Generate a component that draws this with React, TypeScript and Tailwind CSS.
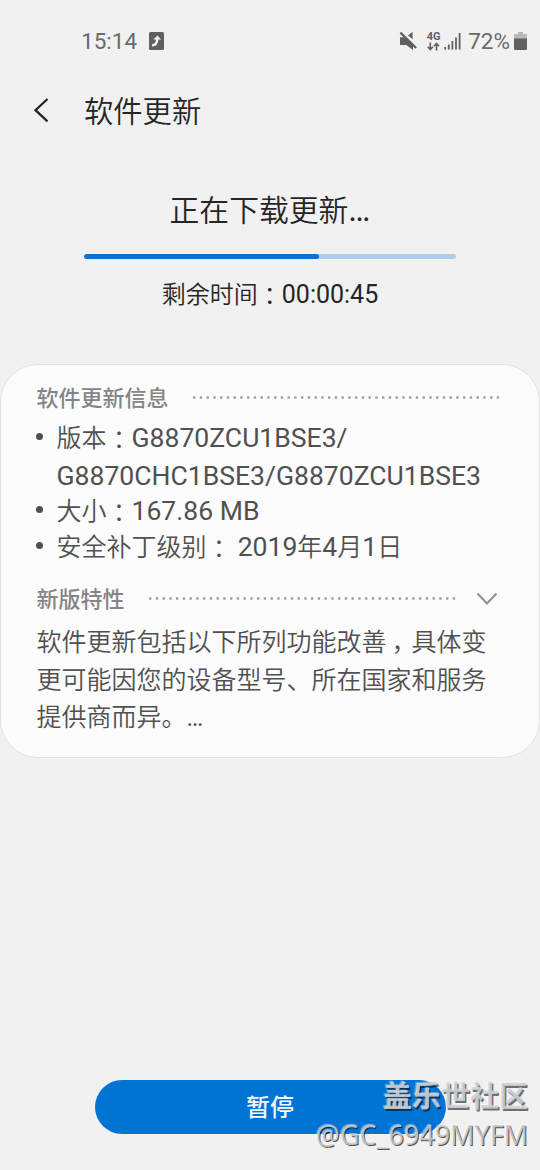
import type { ReactNode } from "react";

function Colon() {
  return <span className="relative top-[1.5px] font-['Noto_Sans_CJK_JP',sans-serif]">：</span>;
}

function Latin({ children }: { children: ReactNode }) {
  return <span className="text-[26.55px] font-normal">{children}</span>;
}

function StatusBar() {
  return (
    <header className="flex h-[82px] items-center pl-[81px] pr-[13px] text-[22.5px] font-normal text-[#6a6a6a]">
      <span className="w-[56px] leading-none">15:14</span>
      <svg className="ml-3 h-[18px] w-[15px]" viewBox="0 0 15 18">
        <rect width="15" height="18" rx="1.5" fill="#606060" />
        <path d="M3 13.4 C6.5 13.4 8.2 11.5 8.2 6.5" fill="none" stroke="#f1f1f1" strokeWidth="2.4" />
        <path d="M4.4 7.4 8.3 3.4 12.2 7.4Z" fill="#f1f1f1" />
      </svg>
      <div className="ml-auto flex items-center">
        <svg className="h-[20px] w-[18px]" viewBox="0 0 18 20">
          <path d="M1 6.3H6L14 14V19L7.3 14H1Z M9 4.6 13.6 0.8V8.3Z" fill="#606060" />
          <path d="M1.4 1.6 17.2 17" stroke="#606060" strokeWidth="2.2" />
        </svg>
        <div className="ml-[9px] flex w-[15px] flex-col items-center">
          <span className="text-[11px] font-bold leading-[10px] text-[#606060]">4G</span>
          <svg className="h-[9px] w-[13px]" viewBox="0 0 13 9">
            <path d="M3.3 0.5V7.5 M0.7 4.8 3.3 7.6 5.9 4.8 M9.5 8.5V1.5 M6.9 4.2 9.5 1.4 12.1 4.2" fill="none" stroke="#606060" strokeWidth="1.6" />
          </svg>
        </div>
        <svg className="ml-[3px] h-[18px] w-[17px]" viewBox="0 0 17 18">
          <path d="M1.2 15V17.5 M4.8 12.5V17.5 M8.4 9V17.5 M12 5.5V17.5 M15.6 1V17.5" stroke="#606060" strokeWidth="1.8" />
        </svg>
        <span className="ml-[7px] leading-none">72%</span>
        <svg className="ml-[4px] h-[18px] w-[13px]" viewBox="0 0 13 18">
          <path d="M4 0H9V2H13V7H0V2H4Z" fill="#b9b9b9" />
          <path d="M0 6.5H13V17Q13 18 12 18H1Q0 18 0 17Z" fill="#606060" />
        </svg>
      </div>
    </header>
  );
}

function InfoRow({ children, className }: { children: ReactNode; className: string }) {
  return (
    <li className={`flex ${className}`}>
      <span className="-ml-px mr-[14px] mt-[15px] size-[7px] shrink-0 rounded-full bg-[#505050]" />
      <span className="whitespace-nowrap">{children}</span>
    </li>
  );
}

function Dots() {
  return (
    <svg className="mb-px h-[3px] min-w-0 flex-1" aria-hidden="true">
      <line x1="0" y1="1.5" x2="100%" y2="1.5" stroke="#a0a0a0" strokeWidth="2.4" strokeDasharray="2.4 4.35" />
    </svg>
  );
}

export default function App() {
  return (
    <div className="relative flex h-[1170px] w-[540px] flex-col overflow-hidden bg-[#f1f1f1] font-['Roboto','Noto_Sans_CJK_SC',sans-serif] font-[350] text-[#252525]">
      <StatusBar />

      <nav className="flex h-[56px] items-center pl-[33px]">
        <svg className="h-[26px] w-[16px]" viewBox="0 0 16 26">
          <path d="M14.5 2 2.5 13.2 14.5 24.4" fill="none" stroke="#252525" strokeWidth="2.3" />
        </svg>
        <h1 className="ml-[35px] pt-[5px] text-[29.3px] leading-[51px]">软件更新</h1>
      </nav>

      <section className="mt-[52px] flex flex-col items-center">
        <h2 className="h-[64px] text-[29.8px] leading-[40px]">
          正在下载更新<span className="text-[33px] font-normal">…</span>
        </h2>
        <div className="h-[5px] w-[372px] overflow-hidden rounded-full bg-[#adcde8]">
          <div className="h-full w-[235px] rounded-full bg-[#0c72cb]" />
        </div>
        <p className="mt-[14px] text-[24px] leading-[40px]">
          剩余时间<Colon /><span className="text-[25px] font-normal">00:00:45</span>
        </p>
      </section>

      <section className="mt-[49px] h-[394px] rounded-[38px] border border-[#e2e2e2] bg-[#fcfcfc] pl-[35.5px] pr-[37.5px] pt-[15px] text-[25px] text-[#505050]">
        <div className="flex h-[36px] items-center text-[#858585]">
          <h3 className="mr-[24px] text-[22px] font-medium">软件更新信息</h3>
          <Dots />
        </div>
        <ul className="mt-[2px] leading-[37px]">
          <InfoRow className="h-[73px]">
            版本<Colon /><Latin>G8870ZCU1BSE3/</Latin>
            <br />
            <Latin>G8870CHC1BSE3/G8870ZCU1BSE3</Latin>
          </InfoRow>
          <InfoRow className="h-[36px]">大小<Colon /><Latin>167.86 MB</Latin></InfoRow>
          <InfoRow className="h-[36px]">
            安全补丁级别<Colon /> <Latin>2019</Latin>年<Latin>4</Latin>月<Latin>1</Latin>日
          </InfoRow>
        </ul>
        <div className="mt-[18px] flex h-[36px] items-center pr-[4px] text-[#858585]">
          <h3 className="mr-[24px] text-[22px] font-medium">新版特性</h3>
          <Dots />
          <svg className="ml-[18px] h-[14px] w-[22px]" viewBox="0 0 22 14">
            <path d="M1.5 1.5 11 11.5 20.5 1.5" fill="none" stroke="#929292" strokeWidth="2.2" />
          </svg>
        </div>
        <p className="mt-[7px] whitespace-nowrap leading-[37.5px]">
          软件更新包括以下所列功能改善
          <span className="pl-[5px] pr-[7.5px] [font-feature-settings:'halt']">，</span>具体变
          <br />
          更可能因您的设备型号、所在国家和服务
          <br />
          提供商而异。<span className="font-normal">…</span>
        </p>
      </section>

      <button className="mx-auto mt-auto mb-[36px] h-[54px] w-[351px] rounded-full bg-[#0074d4] pt-[2px] text-[24px] font-medium text-[#f2f8ff]">
        暂停
      </button>

      <div className="absolute bottom-[16px] right-[12px] flex flex-col items-end whitespace-nowrap font-['Noto_Sans','Noto_Sans_CJK_SC',sans-serif] font-normal">
        <span className="text-[29px] font-bold leading-[40px] text-[#cfd2d6]/90 [text-shadow:1.5px_1.5px_0_#0008,-1px_-1px_1px_#fff6]">盖乐世社区</span>
        <span className="text-[26.9px] leading-[38px] text-[#cccccc]/90 [text-shadow:1px_1px_0_#000a,-1px_-1px_1px_#fff8]">@GC_6949MYFM</span>
      </div>
    </div>
  );
}
